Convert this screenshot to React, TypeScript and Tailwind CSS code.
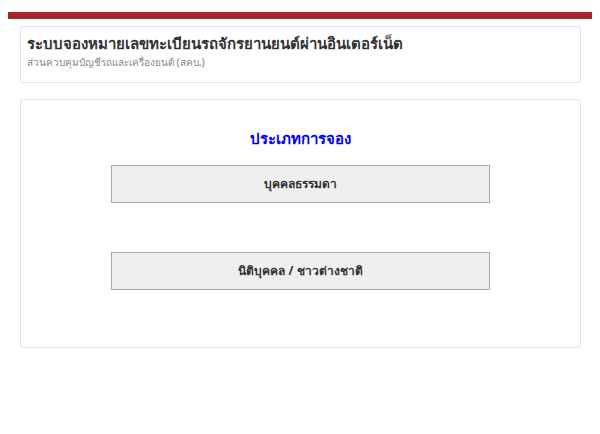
export default function App() {
  return (
    <div className="min-h-[434px] bg-white px-2 pt-3 font-['Noto_Sans','Liberation_Sans',sans-serif] text-[#333]">
      <div className="h-[7px] bg-[#a8262b]" />
      <div className="pl-[12px] pr-[11px]">
        <div className="mt-[7px] h-[57px] rounded-[3px] border border-[#e3e3e3] bg-white px-[6px] pt-[6px]">
          <h1 className="text-[15px] font-bold leading-[20px] text-[#333]">
            ระบบจองหมายเลขทะเบียนรถจักรยานยนต์ผ่านอินเตอร์เน็ต
          </h1>
          <p className="mt-[2px] text-[10px] font-medium leading-[14px] text-[#888]">
            ส่วนควบคุมบัญชีรถและเครื่องยนต์ (สคบ.)
          </p>
        </div>
        <div className="mt-[16px] h-[249px] rounded-[3px] border border-[#e3e3e3] bg-white pt-[27px]">
          <h2 className="text-center text-[15px] font-bold leading-[22px] text-[#0000ff]">
            ประเภทการจอง
          </h2>
          <div className="mt-[16px] flex flex-col items-center gap-[49px]">
            <button className="h-[38px] w-[379px] border border-[#aaa] bg-[#efefef] text-[12px] font-bold text-[#333]">
              บุคคลธรรมดา
            </button>
            <button className="h-[38px] w-[379px] border border-[#aaa] bg-[#efefef] text-[12px] font-bold text-[#333]">
              นิติบุคคล / ชาวต่างชาติ
            </button>
          </div>
        </div>
      </div>
    </div>
  );
}
